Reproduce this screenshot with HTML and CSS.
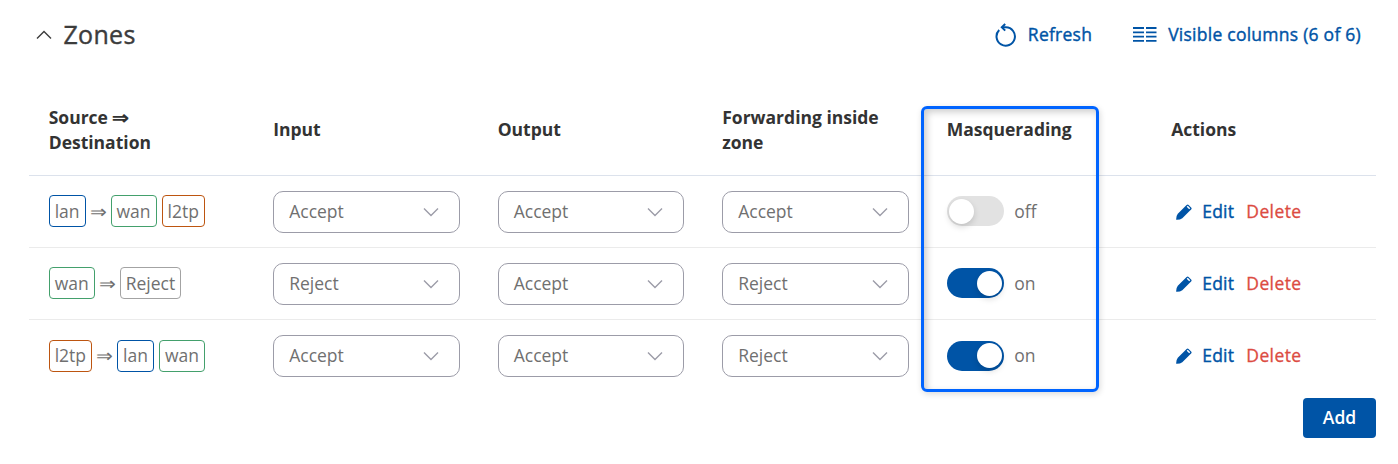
FILE: index.html
```html
<!DOCTYPE html>
<html lang="en">
<head>
    <meta charset="UTF-8">
    <meta name="viewport" content="width=device-width, initial-scale=1.0">
    <title>Firewall - Zones</title>
    <link rel="stylesheet" href="styles.css">
</head>
<body>
    <!-- Shared icons -->
    <svg class="hidden">
        <symbol id="chevron" viewBox="0 0 16 10">
            <path d="M1 1.500l7 7 7-7" fill="none" stroke="currentColor" stroke-width="1.4"/>
        </symbol>
        <symbol id="pencil" viewBox="0 0 16 16">
            <path d="M.2 15.8Q0 12 1.800 9.700L10.600.9q1-1 2 0l2.500 2.500q1 1 0 2L6.300 14.200Q4 16 .2 15.800z" fill="currentColor"/>
            <path d="M11.200 2.300l2.500 2.500" stroke="#fff" stroke-width="1.500"/>
        </symbol>
    </svg>

    <div class="panel">
        <div class="panel-header">
            <svg class="collapse" viewBox="0 0 16 10"><path d="M1 8.500l7-7 7 7" fill="none" stroke="currentColor" stroke-width="1.400"/></svg>
            <h2>Zones</h2>
            <a class="tool refresh">
                <svg width="22" height="24" viewBox="0 0 22 24" fill="none" stroke="currentColor" stroke-width="2">
                    <path d="M4.200 7A9.200 9.200 0 1 0 10.900 4.300H7"/>
                    <path d="M10.200 1L6.800 4.300l3.400 3.300"/>
                </svg>
                Refresh
            </a>
            <a class="tool">
                <svg width="24" height="15" viewBox="0 0 24 15" fill="none" stroke="currentColor" stroke-width="1.800">
                    <path d="M0 1h11M0 5.300h11M0 9.600h11M0 13.900h11M13 1h10.500M13 5.300h10.500M13 9.600h10.500M13 13.900h10.500"/>
                </svg>
                Visible columns (6 of 6)
            </a>
        </div>

        <div class="table">
            <div class="row head">
                <div class="cell">Source <span class="arrow">⇒</span> Destination</div>
                <div class="cell">Input</div>
                <div class="cell">Output</div>
                <div class="cell">Forwarding inside zone</div>
                <div class="cell">Masquerading</div>
                <div class="cell">Actions</div>
            </div>

            <div class="row">
                <div class="cell zones"><span class="zone lan">lan</span><span class="arrow">⇒</span><span class="zone wan">wan</span><span class="zone l2tp">l2tp</span></div>
                <div class="cell"><div class="select">Accept<svg><use href="#chevron"/></svg></div></div>
                <div class="cell"><div class="select">Accept<svg><use href="#chevron"/></svg></div></div>
                <div class="cell"><div class="select">Accept<svg><use href="#chevron"/></svg></div></div>
                <div class="cell"><span class="switch"></span>off</div>
                <div class="cell actions"><svg><use href="#pencil"/></svg><a class="edit">Edit</a><a class="delete">Delete</a></div>
            </div>

            <div class="row">
                <div class="cell zones"><span class="zone wan">wan</span><span class="arrow">⇒</span><span class="zone">Reject</span></div>
                <div class="cell"><div class="select">Reject<svg><use href="#chevron"/></svg></div></div>
                <div class="cell"><div class="select">Accept<svg><use href="#chevron"/></svg></div></div>
                <div class="cell"><div class="select">Reject<svg><use href="#chevron"/></svg></div></div>
                <div class="cell"><span class="switch on"></span>on</div>
                <div class="cell actions"><svg><use href="#pencil"/></svg><a class="edit">Edit</a><a class="delete">Delete</a></div>
            </div>

            <div class="row">
                <div class="cell zones"><span class="zone l2tp">l2tp</span><span class="arrow">⇒</span><span class="zone lan">lan</span><span class="zone wan">wan</span></div>
                <div class="cell"><div class="select">Accept<svg><use href="#chevron"/></svg></div></div>
                <div class="cell"><div class="select">Accept<svg><use href="#chevron"/></svg></div></div>
                <div class="cell"><div class="select">Reject<svg><use href="#chevron"/></svg></div></div>
                <div class="cell"><span class="switch on"></span>on</div>
                <div class="cell actions"><svg><use href="#pencil"/></svg><a class="edit">Edit</a><a class="delete">Delete</a></div>
            </div>

            <!-- Frame over the masquerading column -->
            <div class="highlight"></div>
        </div>

        <div class="footer">
            <button class="add">Add</button>
        </div>
    </div>
</body>
</html>
```
FILE: styles.css
```css
* {
    box-sizing: border-box;
}

body {
    margin: 0;
    background: #fff;
    color: #707070;
    font-family: "Open Sans", "Noto Sans", sans-serif;
    font-size: 17.5px;
    line-height: 25px;
}

.hidden {
    display: none;
}

.panel {
    padding: 0 22px 0 29px;
}

/* Title bar */
.panel-header {
    display: flex;
    align-items: center;
    height: 69px;
    padding: 0 15px 0 6.5px;
}

.panel-header h2 {
    margin: 0 auto 0 12px;
    color: #3c3c3c;
    font-size: 25px;
    font-weight: 500;
    letter-spacing: 0.3px;
    -webkit-text-stroke: 0.4px;
}

.collapse {
    width: 16px;
    height: 10px;
    color: #3c3c3c;
}

.tool {
    display: flex;
    align-items: center;
    gap: 11px;
    color: #0054a6;
    letter-spacing: 0.25px;
    -webkit-text-stroke: 0.4px;
}

.refresh {
    margin-right: 41px;
}

/* Table */
.table {
    position: relative;
    padding-top: 15px;
}

.row {
    display: grid;
    grid-template-columns: repeat(6, 1fr);
    height: 72px;
    border-bottom: 1px solid #ebebeb;
}

.row.head {
    height: 92px;
    border-bottom-color: #dce2ec;
    color: #333;
    font-weight: 700;
}

.row:nth-child(4) {
    height: 71px;
    border-bottom: none;
}

.cell {
    display: flex;
    align-items: center;
    padding: 0 18.5px 0 19.7px;
}

.head .cell {
    display: block;
    align-self: center;
    padding-right: 30px;
}

.zone {
    height: 32px;
    margin-bottom: 1px;
    padding: 3px 5px 0;
    border: 1px solid #a3a3a3;
    border-radius: 4px;
}

.zone + .zone {
    margin-left: 5px;
}

.zone.lan {
    border-color: #0054a6;
}

.zone.wan {
    border-color: #43a06c;
}

.zone.l2tp {
    border-color: #bd5510;
}

.row:nth-child(4) .zone,
.row:nth-child(4) .switch {
    margin-bottom: 0;
}

.row:nth-child(4) .zone {
    padding-top: 2px;
}

.arrow {
    display: inline-block;
    transform: scaleX(1.12);
}

.zones .arrow {
    margin: 0 5px;
}

.select {
    display: flex;
    align-items: center;
    justify-content: space-between;
    width: 100%;
    height: 42px;
    padding: 0 20px 0 15px;
    border: 1px solid #9c9ca8;
    border-radius: 10px;
}

.select svg {
    width: 16px;
    height: 10px;
    color: #9c9ca8;
}

.switch {
    width: 57px;
    height: 30px;
    margin-right: 10.5px;
    margin-bottom: 1px;
    padding: 2.5px;
    border-radius: 15px;
    background: #e2e2e2;
}

.switch::before {
    content: "";
    display: block;
    width: 25px;
    height: 25px;
    border-radius: 50%;
    background: #fff;
    box-shadow: 0 3px 6px rgba(0, 0, 0, 0.15);
}

.switch.on {
    background: #0054a6;
}

.switch.on::before {
    margin-left: 27.5px;
}

.actions svg {
    width: 16px;
    height: 16px;
    margin: 0 10px 0 5px;
    color: #0054a6;
}

.edit {
    margin-right: 12px;
    color: #0054a6;
    letter-spacing: 0.25px;
    -webkit-text-stroke: 0.4px;
}

.delete {
    color: #dc4b41;
    letter-spacing: 0.4px;
    -webkit-text-stroke: 0.3px;
}

.highlight {
    position: absolute;
    top: 37px;
    left: 892px;
    width: 178px;
    height: 286px;
    border: 3px solid #0064ff;
    border-radius: 6px;
    box-shadow: 1px 2px 6px rgba(0, 0, 0, 0.15), inset 3px 3px 7px rgba(0, 0, 0, 0.2);
}

/* Bottom bar */
.footer {
    display: flex;
    justify-content: flex-end;
    padding-top: 7px;
}

.add {
    width: 73px;
    height: 40px;
    padding: 0 0 2px;
    border: none;
    border-radius: 4px;
    background: #0054a6;
    color: #fff;
    font: inherit;
    font-weight: 600;
}
```
